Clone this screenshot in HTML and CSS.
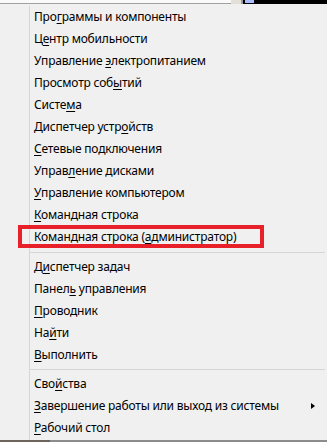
FILE: index.html
```html
<!DOCTYPE html>
<html lang="ru">
  <head>
    <meta charset="UTF-8" />
    <meta name="viewport" content="width=device-width, initial-scale=1.0" />
    <title>Меню Win+X</title>
    <link rel="stylesheet" href="styles.css">
  </head>
  <body>
    <!-- полоска окна за меню -->
    <div class="top-strip">
      <div class="strip-light"></div>
      <div class="strip-beige"></div>
      <div class="strip-dark"><span class="strip-icon"></span></div>
    </div>

    <div class="menu">
      <div class="menu-list">
        <div class="menu-item">Про<u>г</u>раммы и компоненты</div>
        <div class="menu-item">Ц<u>е</u>нтр мобильности</div>
        <div class="menu-item">Управление <u>э</u>лектропитанием</div>
        <div class="menu-item">Просмотр соб<u>ы</u>тий</div>
        <div class="menu-item">Систе<u>м</u>а</div>
        <div class="menu-item">Диспетчер устр<u>о</u>йств</div>
        <div class="menu-item"><u>С</u>етевые подключения</div>
        <div class="menu-item">Управ<u>л</u>ение дисками</div>
        <div class="menu-item"><u>У</u>правление компьютером</div>
        <div class="menu-item"><u>К</u>омандная строка</div>
        <div class="menu-item highlighted">Командная строка (<u>а</u>дминистратор)</div>
        <div class="separator"></div>
        <div class="menu-item">Д<u>и</u>спетчер задач</div>
        <div class="menu-item">Панел<u>ь</u> управления</div>
        <div class="menu-item"><u>П</u>роводник</div>
        <div class="menu-item">На<u>й</u>ти</div>
        <div class="menu-item"><u>В</u>ыполнить</div>
        <div class="separator short"></div>
        <div class="menu-item">Сво<u>й</u>ства</div>
        <div class="menu-item has-sub">
          <span><u>З</u>авершение работы или выход из системы</span>
          <span class="sub-arrow"></span>
        </div>
        <div class="menu-item"><u>Р</u>абочий стол</div>
      </div>
    </div>

    <div class="bottom-strip">
      <div class="bottom-dark"></div>
      <div class="bottom-light"></div>
    </div>
  </body>
</html>
```

FILE: styles.css
```css
html,
body {
  margin: 0;
  height: 100%;
}

body {
  display: flex;
  flex-direction: column;
  background-color: #f0f0f0;
  font-family: 'Noto Sans', 'Open Sans', sans-serif;
  font-size: 12px;
  letter-spacing: -0.2px;
  color: #000;
  overflow: hidden;
}

/* верхняя полоска */
.top-strip {
  display: flex;
  height: 4px;
  flex-shrink: 0;
}

.strip-light {
  flex: 1;
  background-color: #fafafa;
  border-bottom: 1px solid #a0a0a0;
}

.strip-beige {
  width: 10px;
  background-color: #e2e0d8;
  border-right: 2px solid #9a9a9a;
}

.strip-dark {
  width: 84px;
  background-color: #000;
  display: flex;
}

.strip-icon {
  width: 9px;
  height: 3px;
  margin-left: 2px;
  background-color: #a9bcff;
}

/* само меню */
.menu {
  flex: 1;
  padding: 2px 2px 0 29px;
}

.menu-list {
  border-left: 1px solid #d6d6d6;
  height: 100%;
}

.menu-item {
  height: 22px;
  line-height: 22px;
  padding-left: 4px;
  padding-right: 10px;
  white-space: nowrap;
}

.menu-item u {
  text-decoration-thickness: 1px;
  text-underline-offset: 2px;
}

/* рамка-выделение */
.highlighted {
  position: relative;
}

.highlighted::after {
  content: '';
  position: absolute;
  left: -12px;
  top: -1px;
  width: 238px;
  height: 15px;
  border: 4px solid #e8202a;
}

.separator {
  height: 8px;
  display: flex;
  align-items: center;
}

.separator::before {
  content: '';
  flex: 1;
  border-top: 1px solid #d6d6d6;
}

.separator.short {
  height: 7px;
}

.has-sub {
  display: flex;
  align-items: center;
  justify-content: space-between;
}

.sub-arrow {
  width: 0;
  height: 0;
  border-top: 3px solid transparent;
  border-bottom: 3px solid transparent;
  border-left: 4px solid #000;
}

/* нижняя полоска */
.bottom-strip {
  display: flex;
  height: 2px;
  flex-shrink: 0;
}

.bottom-dark {
  width: 50px;
  background-color: #6b655c;
}

.bottom-light {
  flex: 1;
  background-color: #8c8c8c;
}
```
